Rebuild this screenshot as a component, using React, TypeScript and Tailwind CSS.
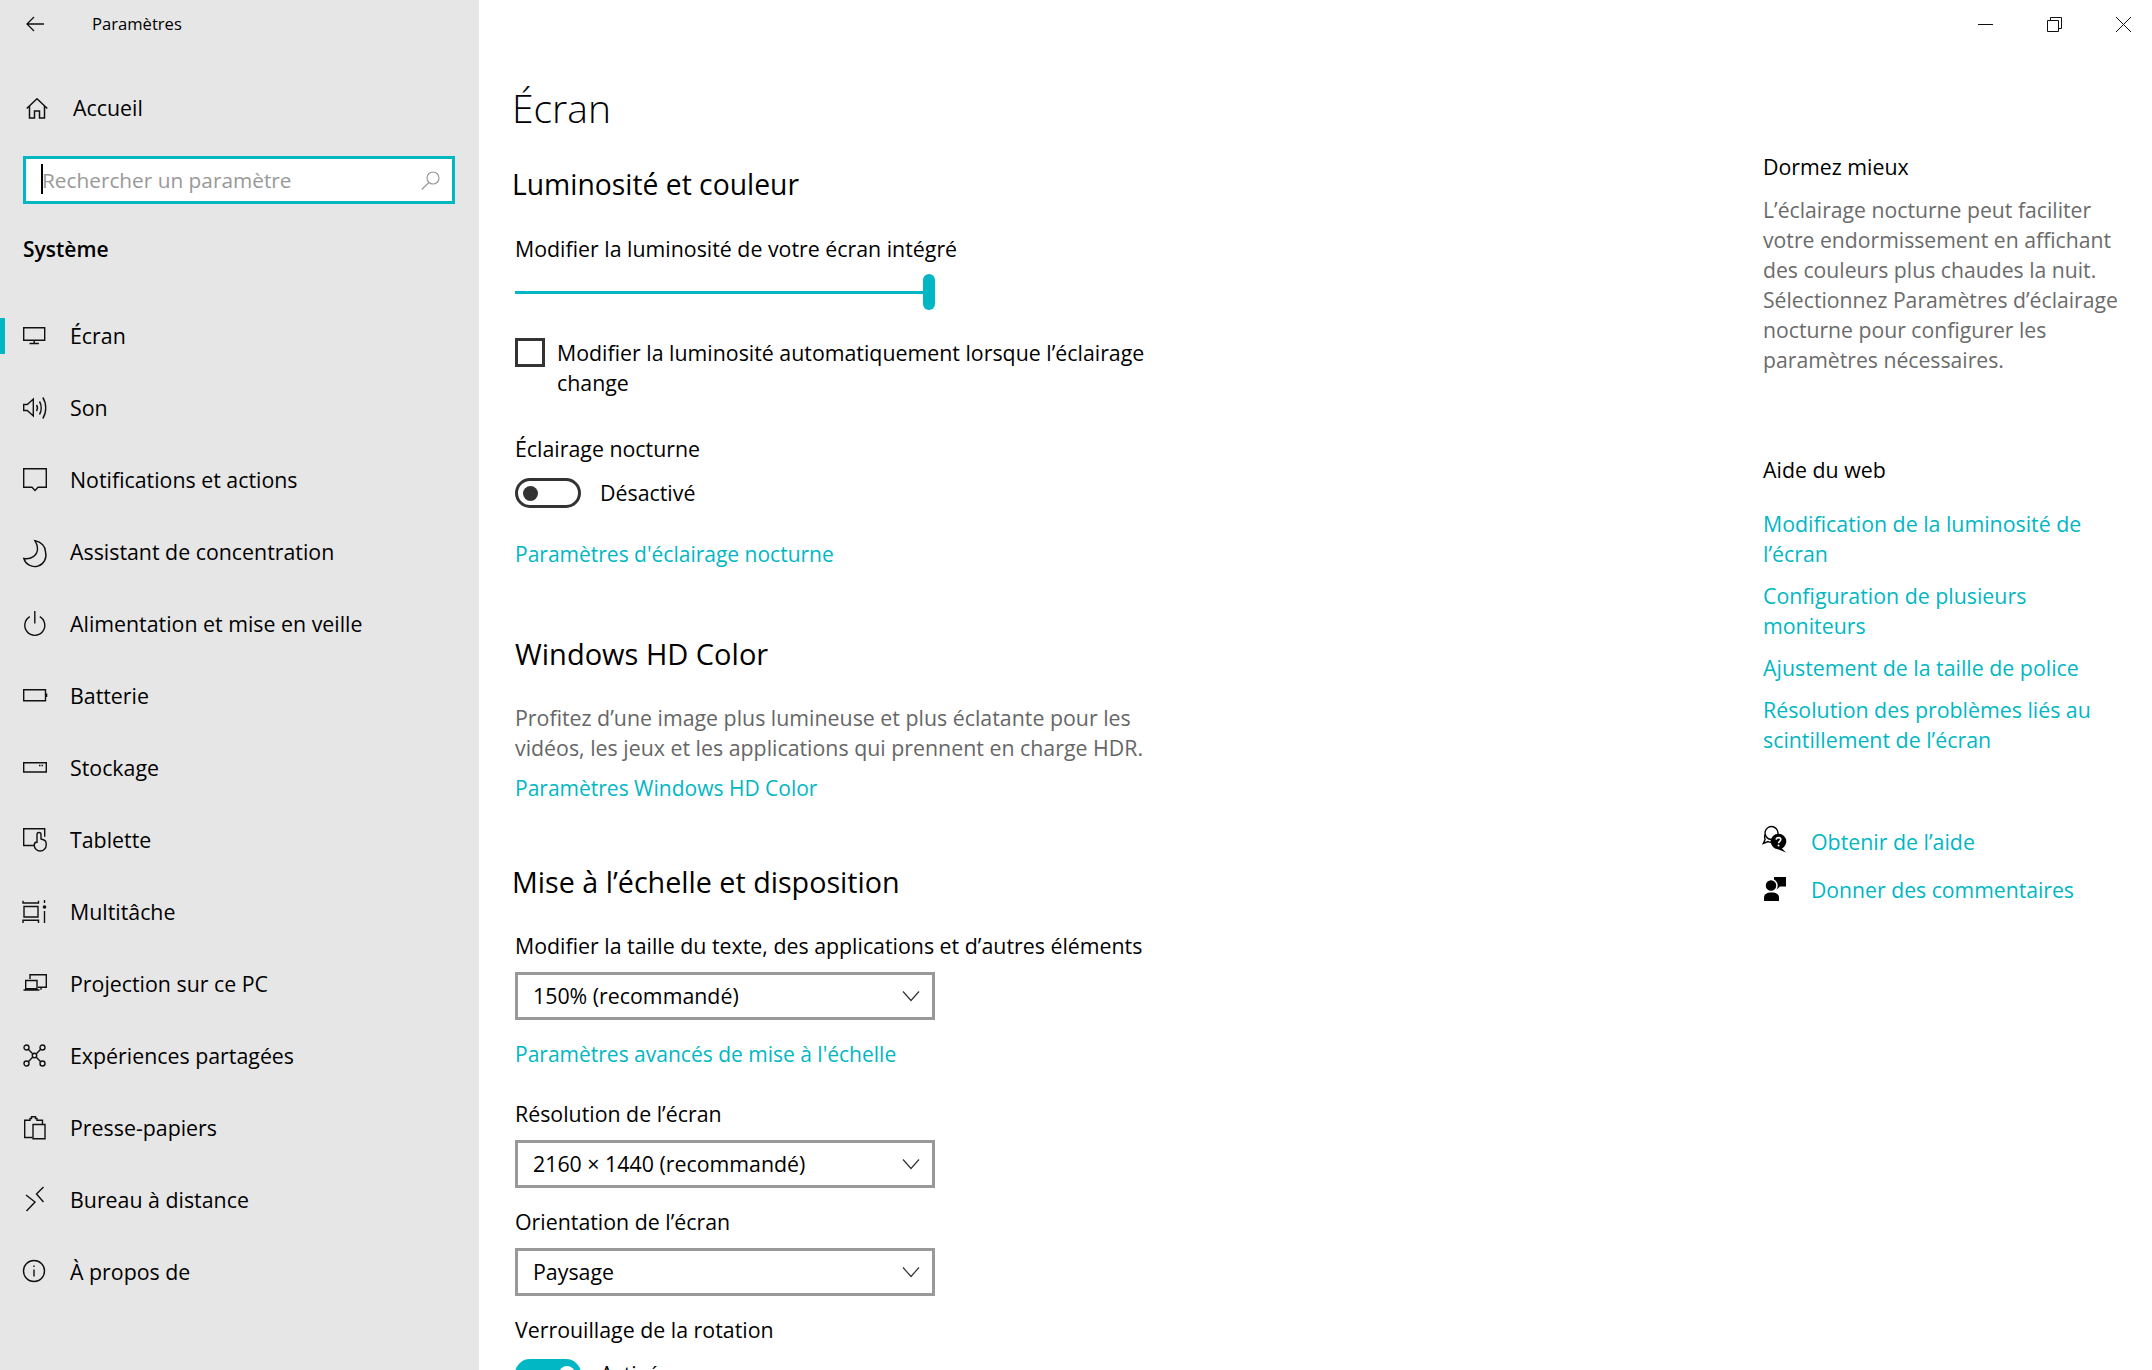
import React from 'react';

const svgProps = {
  width: 24,
  height: 24,
  viewBox: '0 0 24 24',
  fill: 'none',
  stroke: '#111',
  strokeWidth: 1.4,
  className: 'shrink-0 overflow-visible',
};

const navItems: { label: string; active?: boolean; icon: React.ReactNode }[] = [
  {
    label: 'Écran',
    active: true,
    icon: (
      <svg {...svgProps}>
        <path d="M.7 3.700h21v12.600H.7zM11.200 16.300v3M6.500 19.500h9.400" />
      </svg>
    ),
  },
  {
    label: 'Son',
    icon: (
      <svg {...svgProps}>
        <path d="M.7 8.500h3.600l6-5.500v17l-6-5.500H.7zM13.500 9c1.200 1.800 1.200 4.200 0 6M16.500 5.500c2.300 3.600 2.300 9.400 0 13M19.800 1.500c3.900 6 3.900 15 0 21" />
      </svg>
    ),
  },
  {
    label: 'Notifications et actions',
    icon: (
      <svg {...svgProps}>
        <path d="M.7.7h22.600v18.600h-8.300L12 22.500l-3-3.200H.7z" />
      </svg>
    ),
  },
  {
    label: 'Assistant de concentration',
    icon: (
      <svg {...svgProps}>
        <path d="M12 .8c6.500 1.200 10.500 5.700 10.500 11.200A10.800 10.800 0 0 1 .8 18.500C8 20 14.500 15 14.500 9c0-3-1-6-2.500-8.200z" />
      </svg>
    ),
  },
  {
    label: 'Alimentation et mise en veille',
    icon: (
      <svg {...svgProps}>
        <path d="M6.800 4.700a10 10 0 1 0 10 0M11.800 -1v12.500" />
      </svg>
    ),
  },
  {
    label: 'Batterie',
    icon: (
      <svg {...svgProps}>
        <path d="M.7 5.700h21.800v11H.7z" />
        <path d="M23.500 9.500v3.500" strokeWidth={1.6} />
      </svg>
    ),
  },
  {
    label: 'Stockage',
    icon: (
      <svg {...svgProps}>
        <path d="M.7 6.700h22.600v9.300H.7z" />
        <path d="M16 9.500h1.500M18.500 9.500H20" />
      </svg>
    ),
  },
  {
    label: 'Tablette',
    icon: (
      <svg {...svgProps}>
        <path d="M11 17.500H.7V.7h21v8" />
        <path d="M14 15V6.500a2 2 0 0 1 4 0V11l3 1c1.500.6 2.200 1.500 2.200 3.500v1.500a6 6 0 0 1-12 0c0-1.500 1-2.800 3-3" />
      </svg>
    ),
  },
  {
    label: 'Multitâche',
    icon: (
      <svg {...svgProps}>
        <path d="M0 .7V3h15.500V.7M1 6.500h14V17H1zM0 23v-2.700h15.500V23M21.500 0v3M21.500 11v12" />
        <circle cx="21.500" cy="7" r="1.800" fill="#111" stroke="none" />
      </svg>
    ),
  },
  {
    label: 'Projection sur ce PC',
    icon: (
      <svg {...svgProps}>
        <path d="M7 7V2.700h16.300v12.600H15M18 15.300v2.500" />
        <path d="M2.700 8.500H14v8.300H2.700zM.5 18h16" />
      </svg>
    ),
  },
  {
    label: 'Expériences partagées',
    icon: (
      <svg {...svgProps}>
        <circle cx="3.500" cy="3.500" r="2.500" />
        <circle cx="19.500" cy="3.500" r="2.500" />
        <circle cx="3.500" cy="19.500" r="2.500" />
        <circle cx="19.500" cy="19.500" r="2.500" />
        <circle cx="11.500" cy="11.500" r="2.200" />
        <path d="M5.300 5.300l4.600 4.600M17.700 5.300l-4.600 4.600M5.300 17.700l4.600-4.600M17.700 17.700l-4.600-4.600" />
      </svg>
    ),
  },
  {
    label: 'Presse-papiers',
    icon: (
      <svg {...svgProps}>
        <path d="M9.500 21.500H1.700V4.200H7V2.500h1.500V.8h4V2.500H14v1.700h5.500v4" />
        <path d="M10 8.500h12v14.200H10z" />
      </svg>
    ),
  },
  {
    label: 'Bureau à distance',
    icon: (
      <svg {...svgProps}>
        <path d="M3 7l9 7-8.500 9M20.500 -1l-7 7 7 8" />
      </svg>
    ),
  },
  {
    label: 'À propos de',
    icon: (
      <svg {...svgProps}>
        <circle cx="11" cy="11" r="10.500" />
        <path d="M11 9.500v7M11 5.500v1.500" />
      </svg>
    ),
  },
];

const Chevron = () => (
  <svg width="18" height="12" viewBox="0 0 18 12" fill="none" stroke="#333" strokeWidth="1.2" className="shrink-0">
    <path d="M1 1.500l8 9 8-9" />
  </svg>
);

const Select = ({ value, className }: { value: string; className: string }) => (
  <div className={`flex h-[48px] w-[420px] items-center justify-between border-[3px] border-[#999999] pl-[15px] pr-[12px] ${className}`}>
    <span>{value}</span>
    <Chevron />
  </div>
);

const Toggle = ({ on, label, className }: { on: boolean; label: string; className: string }) => (
  <div className={`flex h-[30px] shrink-0 items-center ${className}`}>
    <div
      className={
        on
          ? 'flex h-[30px] w-[66px] items-center justify-end rounded-full bg-[#00b7c3] pr-[6px]'
          : 'flex h-[30px] w-[66px] items-center rounded-full border-[3px] border-[#333333] pl-[5px]'
      }
    >
      <div className={on ? 'h-[16px] w-[16px] rounded-full bg-white' : 'h-[15px] w-[15px] rounded-full bg-[#333333]'} />
    </div>
    <span className="ml-[19px]">{label}</span>
  </div>
);

const App = () => {
  return (
    <div className="flex h-[1370px] w-[2152px] overflow-hidden bg-white font-['Open_Sans',sans-serif] text-[21.35px] leading-[30px] text-black">
      <aside className="flex w-[479px] shrink-0 flex-col bg-[#e6e6e6]">
        <div className="flex h-[48px] shrink-0 items-center pl-[26px]">
          <svg width="18" height="16" viewBox="0 0 18 16" fill="none" stroke="#111" strokeWidth="1.3">
            <path d="M18 8H1M8 1L1 8l7 7" />
          </svg>
          <span className="ml-[48px] text-[16.6px]">Paramètres</span>
        </div>
        <div className="mt-[36px] flex h-[48px] shrink-0 items-center pl-[26px]">
          <svg width="22" height="21" viewBox="0 0 22 21" fill="none" stroke="#111" strokeWidth="1.5">
            <path d="M.7 10.500L11 .8l10.300 9.700M3.500 8v12h5v-7h5v7h5V8" />
          </svg>
          <span className="ml-[25px]">Accueil</span>
        </div>
        <div className="relative mx-[23px] mt-[24px] flex h-[48px] w-[432px] shrink-0 items-center justify-between border-[3px] border-[#00b7c3] bg-white pl-[16px] pr-[12px] text-[20.8px] text-[#999999]">
          <div className="absolute left-[15px] top-[5px] h-[30px] w-[2px] bg-black" />
          <span>Rechercher un paramètre</span>
          <svg width="19" height="19" viewBox="0 0 19 19" fill="none" stroke="#999" strokeWidth="1.2">
            <circle cx="12" cy="7" r="6" />
            <path d="M8 11.500L.7 18.500" />
          </svg>
        </div>
        <div className="ml-[23px] mt-[30px] text-[21px] font-semibold">Système</div>
        <nav className="mt-[36px] flex flex-col">
          {navItems.map(item => (
            <div key={item.label} className="relative flex h-[72px] items-center pl-[23px]">
              {item.active && <div className="absolute left-0 top-[18px] h-[36px] w-[5px] bg-[#00b7c3]" />}
              {item.icon}
              <span className="ml-[23px]">{item.label}</span>
            </div>
          ))}
        </nav>
      </aside>

      <main className="flex min-w-0 flex-1 flex-col overflow-hidden">
        <div className="flex h-[48px] shrink-0 items-center justify-end gap-[54px] pr-[21px]">
          <svg width="15" height="15" viewBox="0 0 15 15" fill="none" stroke="#111" strokeWidth="1">
            <path d="M0 7.500h15" />
          </svg>
          <svg width="15" height="15" viewBox="0 0 15 15" fill="none" stroke="#111" strokeWidth="1">
            <path d="M.5 3.500h11v11H.5zM3.500 3.500V.5h11v11h-3" />
          </svg>
          <svg width="15" height="15" viewBox="0 0 15 15" fill="none" stroke="#111" strokeWidth="1">
            <path d="M0 0l15 15M15 0L0 15" />
          </svg>
        </div>

        <div className="flex shrink-0">
          <section className="w-[1284px] shrink-0 pl-[36px]">
            <h1 className="-ml-[3px] mt-[32px] text-[39px] font-light leading-[56px]">Écran</h1>
            <h2 className="-ml-[3px] mt-[28px] text-[28.3px] leading-[40px]">Luminosité et couleur</h2>
            <div className="mt-[30px]">Modifier la luminosité de votre écran intégré</div>
            <div className="mt-[10px] flex h-[36px] w-[420px] items-center">
              <div className="h-[3px] w-[408px] bg-[#00b7c3]" />
              <div className="h-[36px] w-[12px] rounded-full bg-[#00b7c3]" />
            </div>
            <div className="mt-[28px] flex items-start">
              <div className="h-[29px] w-[30px] shrink-0 border-[3px] border-[#333333]" />
              <div className="ml-[12px]">
                Modifier la luminosité automatiquement lorsque l’éclairage
                <br />
                change
              </div>
            </div>
            <div className="mt-[36px]">Éclairage nocturne</div>
            <Toggle on={false} label="Désactivé" className="mt-[14px]" />
            <div className="mt-[31px] text-[21px] text-[#00b7c3]">Paramètres d'éclairage nocturne</div>

            <h2 className="mt-[65px] text-[29px] leading-[40px]">Windows HD Color</h2>
            <p className="mt-[29px] text-[#666666]">
              Profitez d’une image plus lumineuse et plus éclatante pour les
              <br />
              vidéos, les jeux et les applications qui prennent en charge HDR.
            </p>
            <div className="mt-[10px] text-[21px] text-[#00b7c3]">Paramètres Windows HD Color</div>

            <h2 className="-ml-[3px] mt-[59px] text-[28.7px] leading-[40px]">Mise à l’échelle et disposition</h2>
            <div className="mt-[29px]">Modifier la taille du texte, des applications et d’autres éléments</div>
            <Select value="150% (recommandé)" className="mt-[11px]" />
            <div className="mt-[19px] text-[21px] text-[#00b7c3]">Paramètres avancés de mise à l'échelle</div>
            <div className="mt-[30px]">Résolution de l’écran</div>
            <Select value="2160 × 1440 (recommandé)" className="mt-[11px]" />
            <div className="mt-[19px]">Orientation de l’écran</div>
            <Select value="Paysage" className="mt-[11px]" />
            <div className="mt-[19px]">Verrouillage de la rotation</div>
            <Toggle on label="Activé" className="mt-[14px]" />
          </section>

          <section className="min-w-0 flex-1">
            <div className="mt-[104px]">Dormez mieux</div>
            <p className="mt-[13px] text-[21.2px] text-[#6b6b6b]">
              L’éclairage nocturne peut faciliter
              <br />
              votre endormissement en affichant
              <br />
              des couleurs plus chaudes la nuit.
              <br />
              Sélectionnez Paramètres d’éclairage
              <br />
              nocturne pour configurer les
              <br />
              paramètres nécessaires.
            </p>
            <div className="mt-[80px]">Aide du web</div>
            <div className="mt-[24px] text-[#00b7c3]">
              Modification de la luminosité de
              <br />
              l’écran
            </div>
            <div className="mt-[12px] text-[#00b7c3]">
              Configuration de plusieurs
              <br />
              moniteurs
            </div>
            <div className="mt-[12px] text-[#00b7c3]">Ajustement de la taille de police</div>
            <div className="mt-[12px] text-[#00b7c3]">
              Résolution des problèmes liés au
              <br />
              scintillement de l’écran
            </div>
            <div className="mt-[72px] flex items-center">
              <svg width="24" height="24" viewBox="0 0 24 24" className="shrink-0 overflow-visible">
                <path d="M8 9.500a6.500 6.500 0 1 1 6.500-4" fill="none" stroke="#000" strokeWidth="1.400" />
                <path d="M8.500 12.300a6.800 6.800 0 0 1-3.500-.8L.3 13.500l1.800-4A6.500 6.500 0 0 1 2 4.500" fill="none" stroke="#000" strokeWidth="1.400" />
                <circle cx="15.500" cy="11.500" r="7.800" fill="#000" />
                <path d="M18 17.500l5 5-8.500-3.500z" fill="#000" />
                <path d="M13.200 9.600c.2-2.600 4.600-2.600 4.600 0 0 1.900-2.300 1.600-2.300 3.700" fill="none" stroke="#fff" strokeWidth="1.600" />
                <circle cx="15.500" cy="15.600" r="1" fill="#fff" />
              </svg>
              <span className="ml-[24px] text-[#00b7c3]">Obtenir de l’aide</span>
            </div>
            <div className="mt-[18px] flex items-center">
              <svg width="24" height="24" viewBox="0 0 24 24" className="shrink-0 overflow-visible">
                <path d="M11 -1h12v9.500h-6l-3.500 3V8.500H11z" fill="#000" />
                <circle cx="8" cy="7.500" r="6" fill="#000" stroke="#fff" strokeWidth="1.500" />
                <path d="M1 23v-3.500c0-3 2.500-5 7.500-5s7.500 2 7.500 5V23z" fill="#000" />
              </svg>
              <span className="ml-[24px] text-[21.2px] text-[#00b7c3]">Donner des commentaires</span>
            </div>
          </section>
        </div>
      </main>
    </div>
  );
};

export default App;
